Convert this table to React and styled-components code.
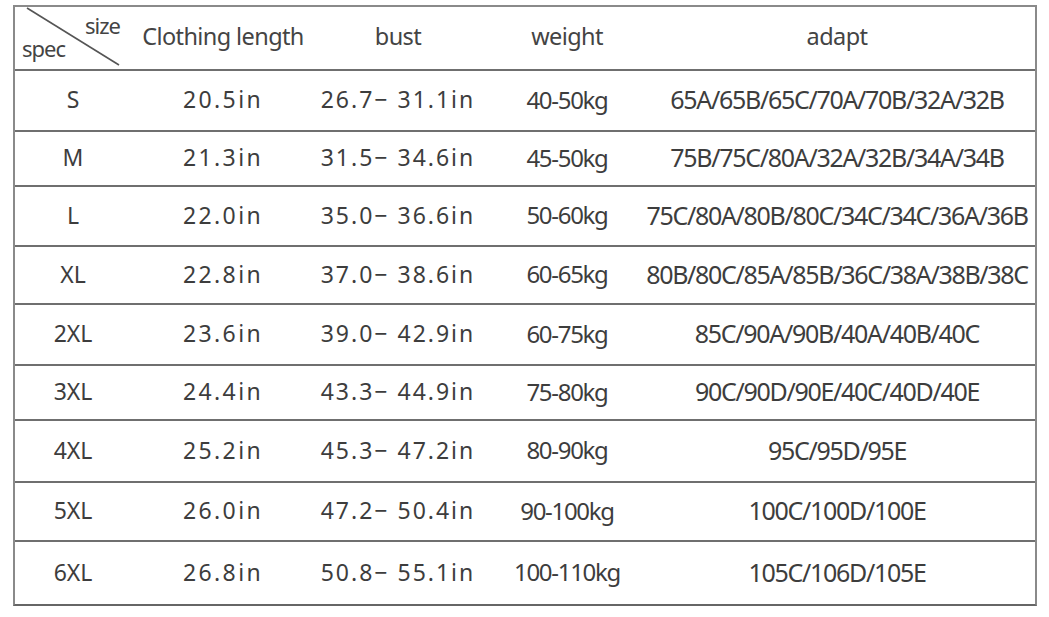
import React from "react";
import styled, { createGlobalStyle } from "styled-components";

const Global = createGlobalStyle`
  html, body { margin: 0; padding: 0; background: #fff; }
  body { width: 1049px; height: 617px; overflow: hidden; }
`;

const Page = styled.div`
  padding: 5px 12px 0 13px;
  font-family: "Noto Sans", "Noto Sans CJK SC", sans-serif;
  color: #3d3d3d;
`;

const Table = styled.div`
  width: 1024px;
  box-sizing: border-box;
  border: 2px solid #8a8a8a;
  border-bottom-color: #666;
`;

const Row = styled.div`
  display: grid;
  grid-template-columns: 116px 184px 166px 172px 368px;
  height: ${(p) => p.$h}px;
  box-sizing: border-box;
  border-top: ${(p) => (p.$first ? "none" : "2px solid #6f6f6f")};
`;

const Cell = styled.div`
  display: flex;
  align-items: center;
  justify-content: center;
  white-space: nowrap;
  font-size: ${(p) => p.$fs || 23}px;
  letter-spacing: ${(p) => p.$ls || "0px"};
  padding-bottom: 3px;
`;

const HeadCell = styled(Cell)`
  font-size: 23.5px;
  letter-spacing: -0.6px;
  color: #444;
  padding-bottom: 4px;
`;

const Corner = styled.div`
  position: relative;
  height: 100%;
`;

const CornerText = styled.span`
  position: absolute;
  font-size: 22px;
  letter-spacing: -1px;
  color: #444;
  left: ${(p) => p.$x}px;
  top: ${(p) => p.$y}px;
  line-height: 1;
`;

const Diagonal = styled.svg`
  position: absolute;
  left: 0;
  top: 0;
`;

const rows = [
  ["S", "20.5in", "26.7− 31.1in", "40-50kg", "65A/65B/65C/70A/70B/32A/32B", 61],
  ["M", "21.3in", "31.5− 34.6in", "45-50kg", "75B/75C/80A/32A/32B/34A/34B", 55],
  ["L", "22.0in", "35.0− 36.6in", "50-60kg", "75C/80A/80B/80C/34C/34C/36A/36B", 60],
  ["XL", "22.8in", "37.0− 38.6in", "60-65kg", "80B/80C/85A/85B/36C/38A/38B/38C", 58],
  ["2XL", "23.6in", "39.0− 42.9in", "60-75kg", "85C/90A/90B/40A/40B/40C", 61],
  ["3XL", "24.4in", "43.3− 44.9in", "75-80kg", "90C/90D/90E/40C/40D/40E", 55],
  ["4XL", "25.2in", "45.3− 47.2in", "80-90kg", "95C/95D/95E", 62],
  ["5XL", "26.0in", "47.2− 50.4in", "90-100kg", "100C/100D/100E", 59],
  ["6XL", "26.8in", "50.8− 55.1in", "100-110kg", "105C/106D/105E", 64],
];

export default function App() {
  return (
    <>
      <Global />
      <Page>
        <Table>
          <Row $first $h={62}>
            <Corner>
              <Diagonal width="116" height="62">
                <line x1="12" y1="1" x2="104" y2="58" stroke="#555" strokeWidth="1.6" />
              </Diagonal>
              <CornerText $x={70} $y={7}>size</CornerText>
              <CornerText $x={7} $y={30}>spec</CornerText>
            </Corner>
            <HeadCell>Clothing length</HeadCell>
            <HeadCell>bust</HeadCell>
            <HeadCell>weight</HeadCell>
            <HeadCell>adapt</HeadCell>
          </Row>
          {rows.map(([s, len, bust, w, a, h]) => (
            <Row key={s} $h={h}>
              <Cell $fs={23}>{s}</Cell>
              <Cell $fs={23} $ls="2.4px">{len}</Cell>
              <Cell $fs={23} $ls="2px">{bust}</Cell>
              <Cell $fs={24} $ls="-1.3px">{w}</Cell>
              <Cell $fs={25} $ls="-1.3px">{a}</Cell>
            </Row>
          ))}
        </Table>
      </Page>
    </>
  );
}
